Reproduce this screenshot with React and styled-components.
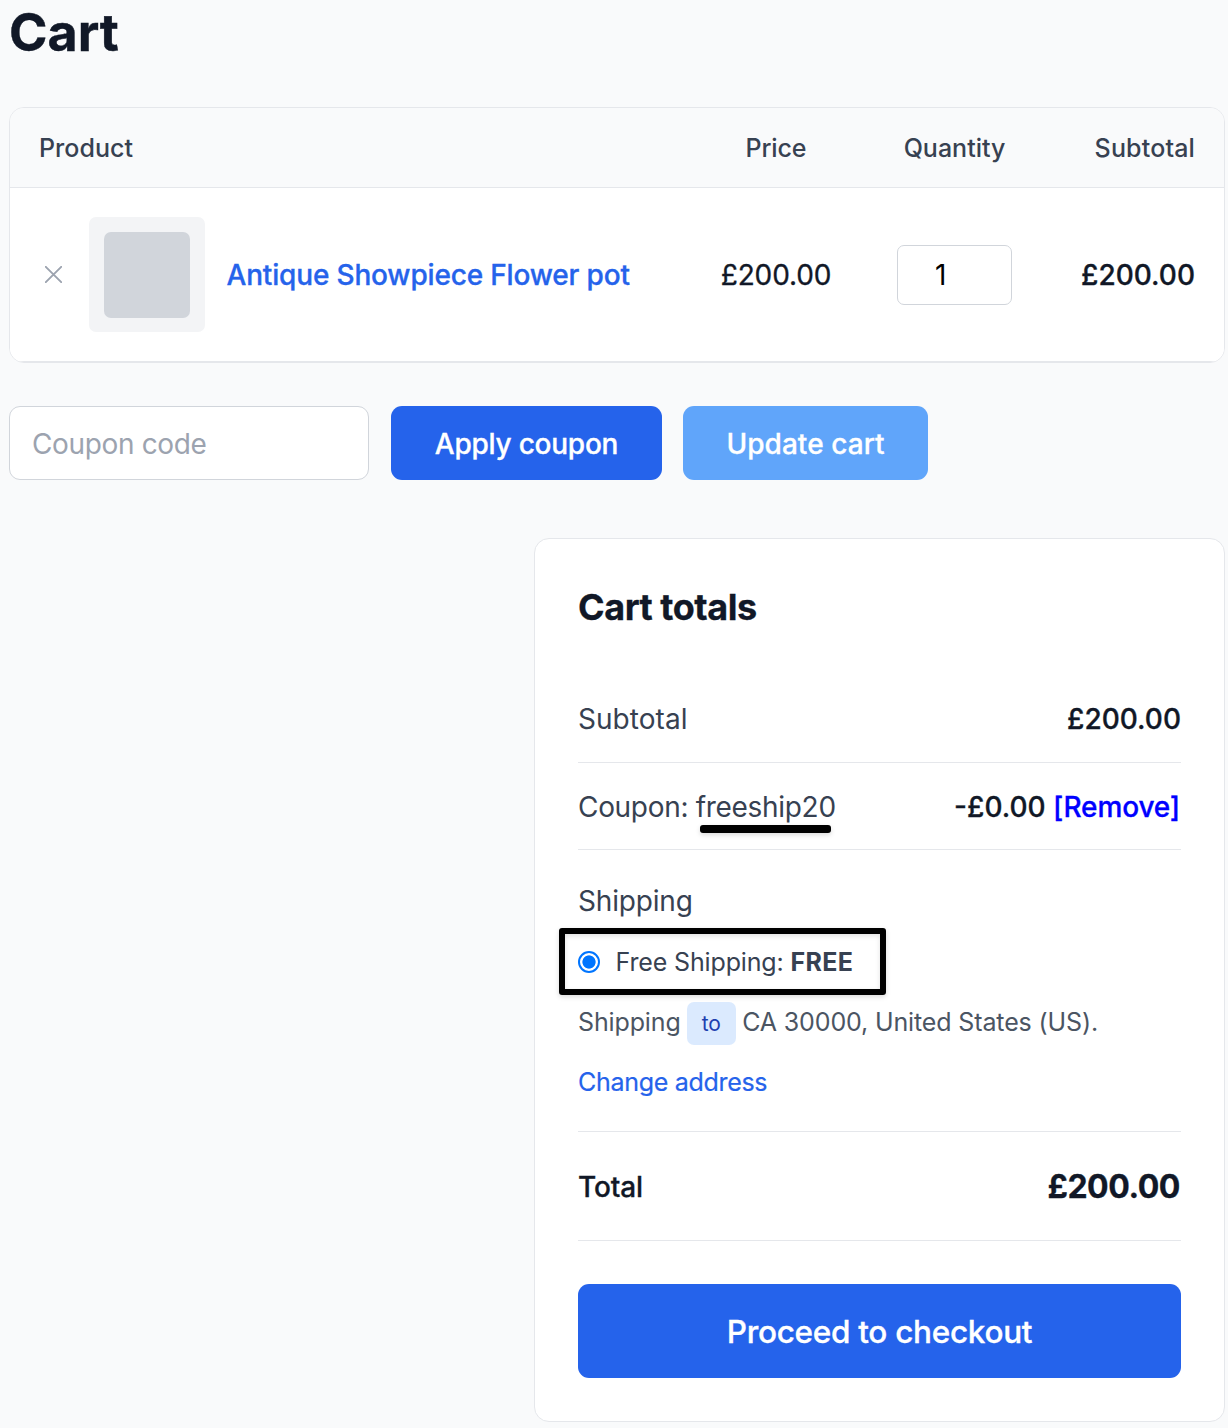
import styled, { createGlobalStyle } from 'styled-components';

const v = {
    bg: "#f9fafb",
    line: "#e5e7eb",
    field: "#d1d5db",
    ink: "#111827",
    text: "#374151",
    muted: "#4b5563",
    blue: "#2563eb",
};

export default function App(){
    return (
    <>
        <GlobalStyle/>
        <Page>
            <PageTitle>Cart</PageTitle>
            <CartTable/>
            <Actions>
                <CouponInput placeholder="Coupon code"/>
                <Button $w={271} $ls={-0.24}>Apply coupon</Button>
                <Button $w={245} $ls={0.06} $soft>Update cart</Button>
            </Actions>
            <CartTotals/>
        </Page>
    </>
    );
}

function CartTable(){
    return (
    <TableCard>
        <TableHead>
            <HeadCell $ls={0.04}>Product</HeadCell>
            <HeadCell $align="center" $ls={-0.1}>Price</HeadCell>
            <HeadCell $align="center">Quantity</HeadCell>
            <HeadCell $align="right" $ls={0.16}>Subtotal</HeadCell>
        </TableHead>
        {items.map(({name, price, qty, subtotal})=>(
            <TableRow key={name}>
                <ProductCell>
                    <RemoveButton aria-label="Remove item">
                        <svg width="17" height="17" viewBox="0 0 17 17">
                            <path d="M0.8 0.8L16.2 16.2M16.2 0.8L0.8 16.2" stroke="currentColor" strokeWidth="1.9" strokeLinecap="round"/>
                        </svg>
                    </RemoveButton>
                    <Thumb><ThumbInner/></Thumb>
                    <ProductLink href="#">{name}</ProductLink>
                </ProductCell>
                <PriceCell>{price}</PriceCell>
                <QtyCell><QtyInput defaultValue={qty}/></QtyCell>
                <SubtotalCell>{subtotal}</SubtotalCell>
            </TableRow>
        ))}
    </TableCard>
    );
}

function CartTotals(){
    return (
    <TotalsCard>
        <TotalsTitle>Cart totals</TotalsTitle>
        <TotalsRow $h={88}>
            <Label $ls={0.05}>Subtotal</Label>
            <Amount>£200.00</Amount>
        </TotalsRow>
        <TotalsRow $h={87} $drop={2}>
            <Label $ls={-0.31}>Coupon: <Marked>freeship20</Marked></Label>
            <Amount>-£0.00 <RemoveLink href="#">[Remove]</RemoveLink></Amount>
        </TotalsRow>
        <ShippingBlock>
            <Label $ls={-0.18}>Shipping</Label>
            <Method>
                <Radio type="radio" defaultChecked/>
                <span>Free Shipping: <b>FREE</b></span>
            </Method>
            <Destination>
                <span>Shipping</span>
                <Chip>to</Chip>
                <span>CA 30000, United States (US).</span>
            </Destination>
            <ChangeLink href="#">Change address</ChangeLink>
        </ShippingBlock>
        <TotalsRow $h={109} $drop={1}>
            <Label $strong $ls={-0.16}>Total</Label>
            <GrandTotal>£200.00</GrandTotal>
        </TotalsRow>
        <Checkout>Proceed to checkout</Checkout>
    </TotalsCard>
    );
}

//#region DATA
const items=[
    {
        name:"Antique Showpiece Flower pot",
        price:"£200.00",
        qty:"1",
        subtotal:"£200.00",
    },
];
//#endregion

//#region STYLED COMPONENTS
const GlobalStyle = createGlobalStyle`
    *, *::before, *::after{
        box-sizing: border-box;
    }
    body{
        margin: 0;
        background: ${v.bg};
        color: ${v.ink};
        font-family: Inter, "Liberation Sans", sans-serif;
        font-size: 28px;
    }
    a{
        text-decoration: none;
    }
    button, input{
        font: inherit;
        margin: 0;
    }
`;

const Page = styled.main`
    display: flex;
    flex-direction: column;
    width: 1228px;
    height: 1428px;
    padding: 0 3px 0 9px;
    overflow: hidden;
`;

const PageTitle = styled.h1`
    margin: 0 0 41px;
    font-size: 52px;
    line-height: 66px;
    font-weight: 700;
    -webkit-text-stroke: 0.4px;
`;

const TableCard = styled.section`
    background: #fff;
    border: 1px solid ${v.line};
    border-radius: 15px;
    overflow: hidden;
`;

const TableHead = styled.div`
    display: grid;
    grid-template-columns: 1fr 178px 179px 151px;
    align-items: center;
    height: 80px;
    padding: 0 29px;
    background: ${v.bg};
    border-bottom: 1px solid ${v.line};
`;

const TableRow = styled(TableHead)`
    height: 174px;
    background: #fff;
`;

const HeadCell = styled.div`
    color: ${v.text};
    font-size: 25px;
    font-weight: 500;
    letter-spacing: ${({$ls=0})=>$ls}px;
    text-align: ${({$align="left"})=>$align};
`;

const ProductCell = styled.div`
    display: flex;
    align-items: center;
`;

const RemoveButton = styled.button`
    display: flex;
    width: 50px;
    padding: 0 0 0 6px;
    border: none;
    background: none;
    color: #9ca3af;
    cursor: pointer;
`;

const Thumb = styled.div`
    width: 116px;
    height: 115px;
    padding: 15px;
    border-radius: 7px;
    background: #f3f4f6;
`;

const ThumbInner = styled.div`
    width: 86px;
    height: 86px;
    border-radius: 7px;
    background: #d1d5db;
`;

const ProductLink = styled.a`
    margin-left: 21.5px;
    color: ${v.blue};
    font-weight: 500;
    letter-spacing: -0.17px;
    white-space: nowrap;
    -webkit-text-stroke: 0.3px;
`;

const PriceCell = styled.div`
    text-align: center;
    letter-spacing: -0.13px;
    -webkit-text-stroke: 0.3px;
`;

const QtyCell = styled.div`
    display: flex;
    justify-content: center;
`;

const QtyInput = styled.input`
    width: 115px;
    height: 60px;
    padding: 0 0 0 37px;
    border: 1px solid ${v.field};
    border-radius: 7px;
    background: #fff;
    color: #000;
`;

const SubtotalCell = styled.div`
    text-align: right;
    font-weight: 500;
    -webkit-text-stroke: 0.3px;
`;

const Actions = styled.div`
    display: flex;
    margin-top: 43px;
`;

const CouponInput = styled.input`
    width: 360px;
    height: 74px;
    margin-right: 22px;
    padding: 2px 22px 0;
    border: 1px solid ${v.field};
    border-radius: 11px;
    background: #fff;
    letter-spacing: -0.35px;
    &::placeholder{
        color: #9ca3af;
        opacity: 1;
    }
`;

const Button = styled.button`
    width: ${({$w})=>$w}px;
    height: 74px;
    padding: 2px 0 0;
    border: none;
    border-radius: 11px;
    background: ${({$soft})=>($soft?"#60a5fa":v.blue)};
    color: #fff;
    font-weight: 500;
    letter-spacing: ${({$ls})=>$ls}px;
    -webkit-text-stroke: 0.3px;
    cursor: pointer;
    & + &{
        margin-left: 21px;
    }
`;

const TotalsCard = styled.section`
    align-self: flex-end;
    width: 691px;
    height: 884px;
    margin-top: 58px;
    padding: 43px;
    background: #fff;
    border: 1px solid ${v.line};
    border-radius: 15px;
`;

const TotalsTitle = styled.h2`
    margin: 0 0 43px;
    font-size: 36px;
    line-height: 50px;
    font-weight: 700;
    letter-spacing: -0.45px;
    -webkit-text-stroke: 0.3px;
`;

const TotalsRow = styled.div`
    display: flex;
    align-items: center;
    justify-content: space-between;
    height: ${({$h})=>$h}px;
    padding-top: ${({$drop=0})=>$drop}px;
    border-bottom: 1px solid ${v.line};
`;

const Label = styled.div`
    color: ${({$strong})=>($strong?v.ink:v.text)};
    font-weight: ${({$strong})=>($strong?500:400)};
    letter-spacing: ${({$ls=0})=>$ls}px;
    line-height: 44px;
    -webkit-text-stroke: ${({$strong})=>($strong?"0.3px":0)};
`;

const Amount = styled.div`
    font-weight: 500;
    -webkit-text-stroke: 0.3px;
`;

const RemoveLink = styled.a`
    margin-right: 1px;
    color: #00f;
    letter-spacing: -0.13px;
`;

/* marker line under the coupon code */
const Marked = styled.span`
    position: relative;
    &::after{
        content: "";
        position: absolute;
        left: 4px;
        bottom: -9px;
        width: 131px;
        height: 8px;
        border-radius: 3px;
        background: #000;
        box-shadow: 0 2px 5px rgba(0,0,0,0.15);
    }
`;

const ShippingBlock = styled.div`
    display: flex;
    flex-direction: column;
    align-items: flex-start;
    height: 282px;
    padding-top: 29px;
    border-bottom: 1px solid ${v.line};
    font-size: 25px;
    ${Label}{
        font-size: 28px;
    }
`;

const Method = styled.label`
    position: relative;
    display: flex;
    align-items: center;
    gap: 15.5px;
    height: 36px;
    margin-top: 21px;
    color: ${v.text};
    letter-spacing: -0.14px;
    white-space: nowrap;
    b{
        font-weight: 700;
        letter-spacing: 0.3px;
    }
    /* marker frame around the selected method */
    &::after{
        content: "";
        position: absolute;
        left: -19px;
        top: -16px;
        width: 327px;
        height: 67px;
        border: 6px solid #000;
        border-radius: 3px;
        box-shadow: 0 2px 5px rgba(0,0,0,0.15), inset 0 2px 5px rgba(0,0,0,0.12);
    }
`;

const Radio = styled.input`
    appearance: none;
    width: 22px;
    height: 22px;
    border: 2px solid #0075ff;
    border-radius: 50%;
    background: radial-gradient(circle, #0075ff 6.2px, #fff 7px);
`;

const Destination = styled.div`
    display: flex;
    align-items: baseline;
    margin-top: 22px;
    color: ${v.muted};
    letter-spacing: -0.13px;
`;

const Chip = styled.span`
    width: 49px;
    margin: 0 6.5px 0 6px;
    border-radius: 7px;
    background: #dbeafe;
    color: #1e40af;
    font-size: 21px;
    line-height: 43px;
    letter-spacing: -0.2px;
    text-align: center;
`;

const ChangeLink = styled.a`
    margin-top: 19px;
    color: ${v.blue};
    line-height: 36px;
    letter-spacing: -0.3px;
    -webkit-text-stroke: 0.2px;
`;

const GrandTotal = styled.div`
    margin-right: 1px;
    font-size: 32px;
    font-weight: 700;
    letter-spacing: -0.45px;
    -webkit-text-stroke: 0.3px;
`;

const Checkout = styled.button`
    width: 100%;
    height: 94px;
    margin-top: 43px;
    padding: 0;
    border: none;
    border-radius: 11px;
    background: ${v.blue};
    color: #fff;
    font-size: 31.5px;
    font-weight: 500;
    letter-spacing: -0.3px;
    -webkit-text-stroke: 0.3px;
    cursor: pointer;
`;
//#endregion
